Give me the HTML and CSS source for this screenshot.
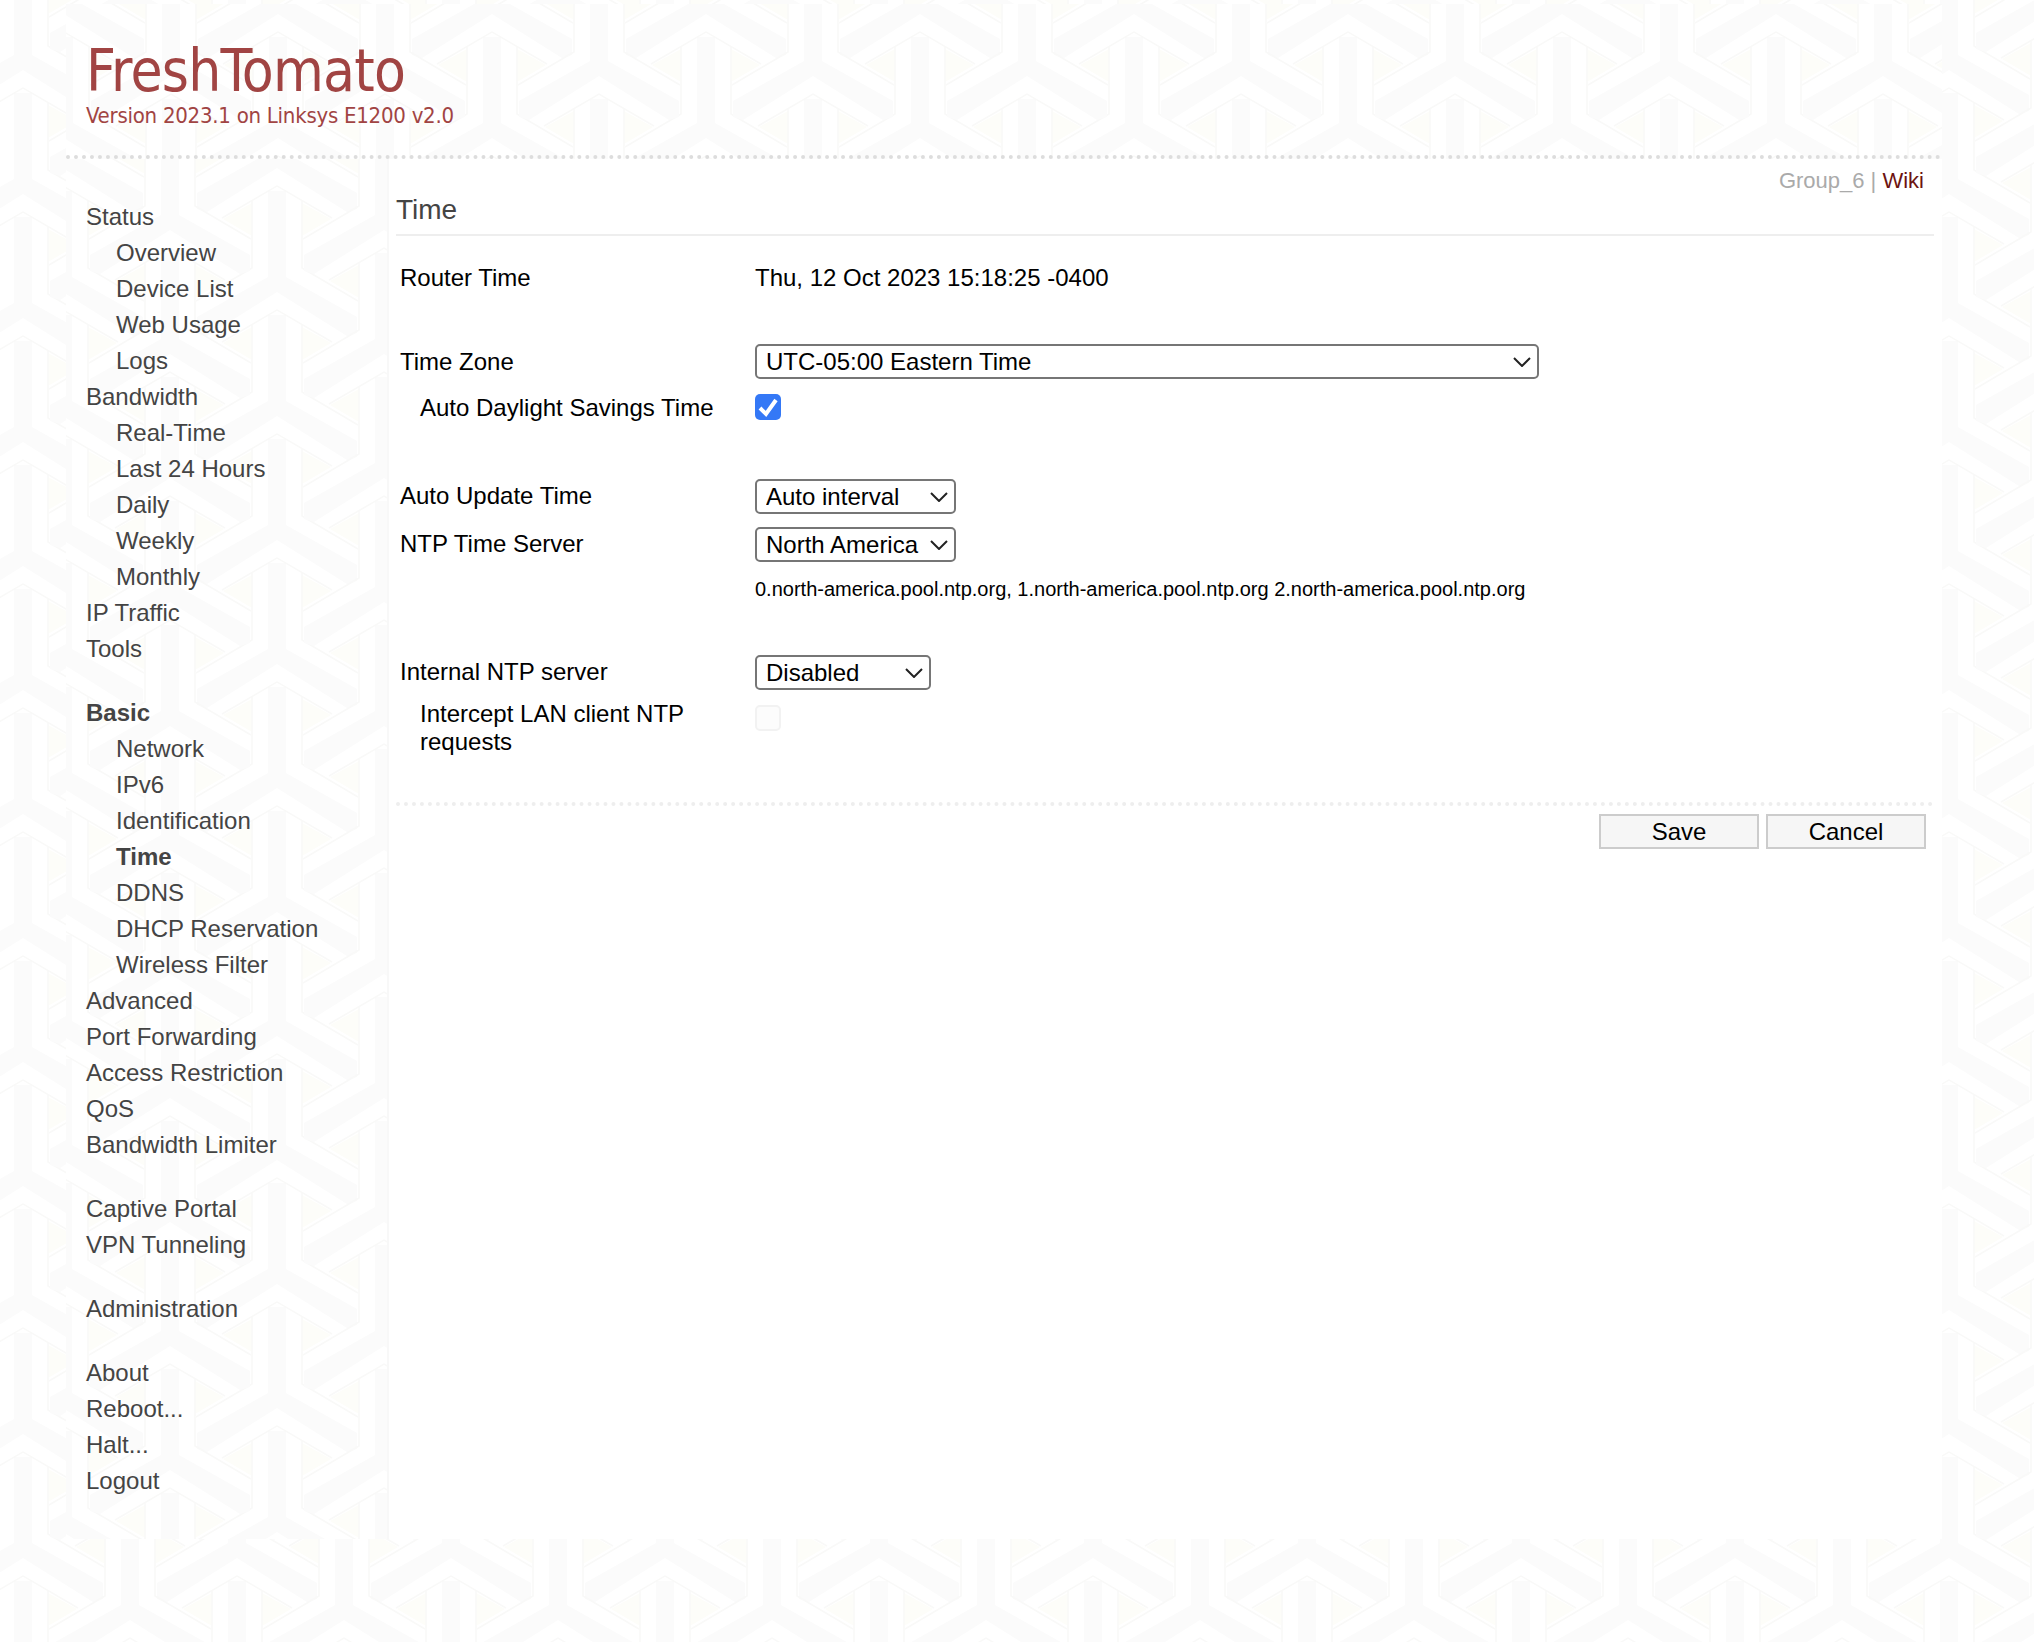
FILE: index.html
```html
<!DOCTYPE html>
<html lang="en">

<head>
    <meta charset="UTF-8">
    <meta name="viewport" content="width=device-width, initial-scale=1.0">
    <title>[router] Basic: Time</title>
    <link rel="stylesheet" href="styles.css">
</head>

<body>
    <div class="container">
        <header class="site-header">
            <div class="title">FreshTomato</div>
            <div class="version">Version 2023.1 on Linksys E1200 v2.0</div>
        </header>

        <div class="columns">
            <nav class="navi">
                <ul class="nav-group">
                    <li><a href="#">Status</a></li>
                    <li class="sub"><a href="#">Overview</a></li>
                    <li class="sub"><a href="#">Device List</a></li>
                    <li class="sub"><a href="#">Web Usage</a></li>
                    <li class="sub"><a href="#">Logs</a></li>
                    <li><a href="#">Bandwidth</a></li>
                    <li class="sub"><a href="#">Real-Time</a></li>
                    <li class="sub"><a href="#">Last 24 Hours</a></li>
                    <li class="sub"><a href="#">Daily</a></li>
                    <li class="sub"><a href="#">Weekly</a></li>
                    <li class="sub"><a href="#">Monthly</a></li>
                    <li><a href="#">IP Traffic</a></li>
                    <li><a href="#">Tools</a></li>
                </ul>
                <ul class="nav-group">
                    <li class="active"><a href="#">Basic</a></li>
                    <li class="sub"><a href="#">Network</a></li>
                    <li class="sub"><a href="#">IPv6</a></li>
                    <li class="sub"><a href="#">Identification</a></li>
                    <li class="sub active"><a href="#">Time</a></li>
                    <li class="sub"><a href="#">DDNS</a></li>
                    <li class="sub"><a href="#">DHCP Reservation</a></li>
                    <li class="sub"><a href="#">Wireless Filter</a></li>
                    <li><a href="#">Advanced</a></li>
                    <li><a href="#">Port Forwarding</a></li>
                    <li><a href="#">Access Restriction</a></li>
                    <li><a href="#">QoS</a></li>
                    <li><a href="#">Bandwidth Limiter</a></li>
                </ul>
                <ul class="nav-group">
                    <li><a href="#">Captive Portal</a></li>
                    <li><a href="#">VPN Tunneling</a></li>
                </ul>
                <ul class="nav-group">
                    <li><a href="#">Administration</a></li>
                </ul>
                <ul class="nav-group">
                    <li><a href="#">About</a></li>
                    <li><a href="#">Reboot...</a></li>
                    <li><a href="#">Halt...</a></li>
                    <li><a href="#">Logout</a></li>
                </ul>
            </nav>

            <main class="content">
                <div class="ident">Group_6 | <a href="#">Wiki</a></div>
                <h1 class="section-title">Time</h1>

                <form class="time-form">
                    <div class="row row-router">
                        <label>Router Time</label>
                        <div>Thu, 12 Oct 2023 15:18:25 -0400</div>
                    </div>

                    <div class="row row-zone">
                        <label>Time Zone</label>
                        <select class="select-zone">
                            <option>UTC-05:00 Eastern Time</option>
                        </select>
                    </div>
                    <div class="row row-dst">
                        <label class="indent">Auto Daylight Savings Time</label>
                        <input type="checkbox" checked>
                    </div>

                    <div class="row row-update">
                        <label>Auto Update Time</label>
                        <select class="select-update">
                            <option>Auto interval</option>
                        </select>
                    </div>
                    <div class="row row-server">
                        <label>NTP Time Server</label>
                        <select class="select-update">
                            <option>North America</option>
                        </select>
                    </div>
                    <div class="row row-note">
                        <label></label>
                        <div class="note">0.north-america.pool.ntp.org, 1.north-america.pool.ntp.org 2.north-america.pool.ntp.org</div>
                    </div>

                    <div class="row row-internal">
                        <label>Internal NTP server</label>
                        <select class="select-internal">
                            <option>Disabled</option>
                        </select>
                    </div>
                    <div class="row row-intercept">
                        <label class="indent">Intercept LAN client NTP requests</label>
                        <input type="checkbox" disabled>
                    </div>

                    <div class="actions">
                        <input type="button" value="Save">
                        <input type="button" value="Cancel">
                    </div>
                </form>
            </main>
        </div>
    </div>
</body>

</html>
```

FILE: styles.css
```css
/* page + hex background tile */
html,
body {
    margin: 0;
    padding: 0;
}

body,
.site-header,
.navi {
    background-color: #fff;
    background-size: 214px 124px;
    background-image: url("data:image/svg+xml,%3Csvg xmlns='http://www.w3.org/2000/svg' xmlns:xlink='http://www.w3.org/1999/xlink' width='214' height='124' viewBox='0 0 214 124'%3E%3Cdefs%3E%3Cg id='u'%3E%3Cpath fill='%23fdfdf9' d='M-25 17V50L-54 33ZM25 17V50L54 33Z'/%3E%3Cpath fill='%23fbfbfb' d='M-9 5H9V91L80 131V147L70 150L0 106L-70 150L-80 147V131L-9 91Z'/%3E%3Cpath fill='none' stroke='%23f9f9f8' stroke-width='1.5' d='M-55 32L0 0L55 32M-25 14V82L-81 115M25 14V82L81 115'/%3E%3C/g%3E%3C/defs%3E%3Cuse xlink:href='%23u' x='0' y='-124'/%3E%3Cuse xlink:href='%23u' x='214' y='-124'/%3E%3Cuse xlink:href='%23u' x='0' y='0'/%3E%3Cuse xlink:href='%23u' x='214' y='0'/%3E%3Cuse xlink:href='%23u' x='0' y='124'/%3E%3Cuse xlink:href='%23u' x='214' y='124'/%3E%3Cuse xlink:href='%23u' x='107' y='-186'/%3E%3Cuse xlink:href='%23u' x='107' y='-62'/%3E%3Cuse xlink:href='%23u' x='107' y='62'/%3E%3C/svg%3E");
}

body {
    min-height: 1642px;
    box-sizing: border-box;
    padding-top: 4px;
    font-family: "Liberation Sans", Arial, sans-serif;
    font-size: 24px;
    line-height: 28px;
    color: #000;
    background-position: 23px 88px;
}

.container {
    width: 1876px;
    margin-left: 66px;
}

/* header */
.site-header {
    box-sizing: border-box;
    height: 155px;
    padding: 36px 20px 0;
    border-bottom: 4px dotted #ddd;
    background-position: 212px 28px;
    font-family: "DejaVu Sans Condensed", "DejaVu Sans", sans-serif;
    color: #a14443;
}

.title {
    font-size: 58px;
    line-height: 62px;
    letter-spacing: -0.75px;
}

.version {
    margin-top: 1px;
    font-size: 22px;
    line-height: 26px;
    letter-spacing: -0.25px;
}

/* two columns */
.columns {
    display: grid;
    grid-template-columns: 321px 1555px;
    height: 1380px;
}

.navi {
    padding: 40px 0 0 20px;
    background-position: 211px 27px;
}

.nav-group {
    list-style: none;
    margin: 0 0 28px;
    padding: 0;
}

.nav-group li {
    height: 36px;
    line-height: 36px;
}

.nav-group li a {
    color: #444;
    text-decoration: none;
}

.nav-group li.sub {
    padding-left: 30px;
}

.nav-group li.active a {
    font-weight: bold;
}

/* main */
.content {
    box-sizing: border-box;
    padding: 8px 8px 0 7px;
    background-color: #fff;
    border-left: 2px solid #f8f8f8;
}

.ident {
    text-align: right;
    padding-right: 10px;
    font-size: 22px;
    color: #aaa;
}

.ident a {
    color: #6d1410;
    text-decoration: none;
}

.section-title {
    margin: 1px 0 0;
    padding-bottom: 10px;
    border-bottom: 2px solid #eee;
    font-size: 28px;
    line-height: 28px;
    font-weight: normal;
    color: #444;
}

.time-form {
    padding-top: 28px;
}

.row {
    display: flex;
    align-items: flex-start;
}

.row label {
    box-sizing: border-box;
    flex: 0 0 359px;
    padding-left: 4px;
}

.row label.indent {
    padding-left: 24px;
    padding-right: 30px;
}

.row-zone {
    margin-top: 52px;
    align-items: center;
}

.row-dst {
    margin-top: 15px;
}

.row-update {
    margin-top: 57px;
    align-items: center;
}

.row-server {
    margin-top: 13px;
    align-items: center;
}

.row-update label,
.row-server label,
.row-internal label {
    margin-bottom: 2px;
}

.row-note {
    margin-top: 13px;
}

.row-internal {
    margin-top: 52px;
    align-items: center;
}

.row-intercept {
    margin-top: 10px;
}

select {
    box-sizing: border-box;
    height: 35px;
    padding: 0 0 0 9px;
    appearance: none;
    border: 2px solid #767676;
    border-radius: 5px;
    background: #fff url("data:image/svg+xml,%3Csvg xmlns='http://www.w3.org/2000/svg' width='18' height='10' viewBox='0 0 18 10'%3E%3Cpath fill='none' stroke='%23222' stroke-width='2' d='M1 1L9 9L17 1'/%3E%3C/svg%3E") no-repeat;
    background-position: right 6px center;
    font-family: inherit;
    font-size: 24px;
    color: #000;
}

.select-zone {
    width: 784px;
}

.select-update {
    width: 201px;
}

.select-internal {
    width: 176px;
}

input[type="checkbox"] {
    width: 26px;
    height: 26px;
    margin: 0;
    appearance: none;
    border-radius: 5px;
    flex: none;
}

input[type="checkbox"]:checked {
    background: #3478f6 url("data:image/svg+xml,%3Csvg xmlns='http://www.w3.org/2000/svg' width='26' height='26' viewBox='0 0 26 26'%3E%3Cpath fill='none' stroke='%23fff' stroke-width='4' d='M5 14L11 20L21 6'/%3E%3C/svg%3E") no-repeat center;
}

input[type="checkbox"]:disabled {
    margin-top: 5px;
    border: 2px solid #f2f2f2;
    background-color: #fcfcfc;
}

.note {
    font-size: 20px;
}

/* buttons */
.actions {
    margin-top: 46px;
    padding-top: 8px;
    border-top: 4px dotted #eee;
    padding-right: 8px;
    display: flex;
    justify-content: flex-end;
    gap: 7px;
}

input[type="button"] {
    box-sizing: border-box;
    width: 160px;
    height: 35px;
    padding: 0;
    border: 2px solid #ccc;
    border-radius: 0;
    background-color: #f6f6f6;
    font-family: inherit;
    font-size: 24px;
    color: #000;
}
```
